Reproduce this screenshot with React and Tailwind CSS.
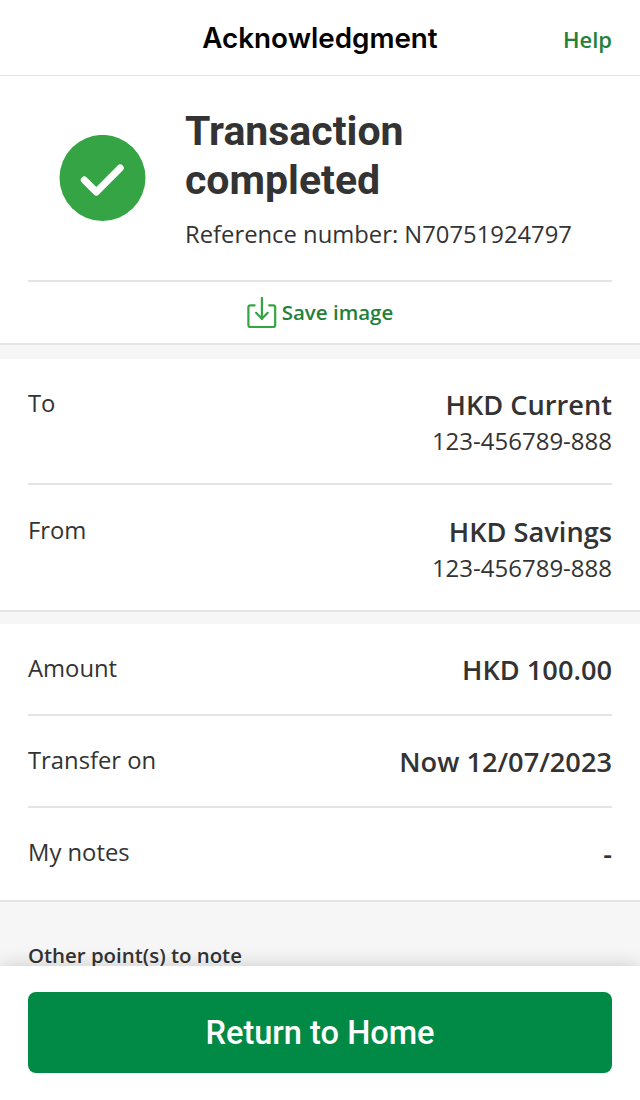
function SuccessIcon() {
  return (
    <svg width="87" height="86" viewBox="0 0 87 86" fill="none" aria-hidden="true">
      <circle cx="43.5" cy="42.9" r="43" fill="#35a444" />
      <path
        d="M25.3 45L37.3 57L61.2 33"
        stroke="#fff"
        strokeWidth="7"
        strokeLinecap="round"
        strokeLinejoin="round"
      />
    </svg>
  )
}

function SaveIcon() {
  return (
    <svg
      width="30"
      height="32"
      viewBox="0 0 30 32"
      fill="none"
      stroke="#35a444"
      strokeWidth="2.2"
      strokeLinecap="round"
      strokeLinejoin="round"
      aria-hidden="true"
    >
      <path d="M7.6 8.3H3.4Q1.4 8.3 1.4 10.3V28Q1.4 30 3.4 30H26.2Q28.2 30 28.2 28V10.3Q28.2 8.3 26.2 8.3H22.2" />
      <path d="M14.9 1V21.8" />
      <path d="M9.1 15.8L14.9 21.8L20.7 15.8" />
    </svg>
  )
}

function Row({ label, value, detail, className }) {
  return (
    <div className={`flex justify-between ${className}`}>
      <span className="text-[23.8px] leading-[32px]">{label}</span>
      <div className="text-right">
        <p className="text-[27.2px] leading-[36px] font-semibold">{value}</p>
        {detail && <p className="text-[24px] leading-[36px]">{detail}</p>}
      </div>
    </div>
  )
}

export default function App() {
  return (
    <div className="flex h-[1100px] w-[640px] flex-col overflow-hidden bg-white font-['Open_Sans',sans-serif] text-[#333]">
      <header className="grid h-[76px] shrink-0 grid-cols-[1fr_auto_1fr] items-center border-b border-[#e4e4e4] px-7">
        <h1 className="col-start-2 font-['Inter',sans-serif] text-[27.8px] leading-[36px] font-semibold text-black">
          Acknowledgment
        </h1>
        <button type="button" className="justify-self-end pt-[3px] text-[22px] leading-[32px] font-semibold text-[#23803a]">
          Help
        </button>
      </header>

      <main className="min-h-0 flex-1 overflow-hidden">
        <section className="h-[269px] border-b-2 border-[#e4e4e4] px-7">
          <div className="flex h-[206px] border-b-2 border-[#e4e4e4] pl-[31px]">
            <div className="mt-[59px] mr-[39px] shrink-0">
              <SuccessIcon />
            </div>
            <div className="pt-[31px]">
              <h2 className="w-[300px] font-['Roboto',sans-serif] text-[41px] leading-[49px] font-bold">
                Transaction completed
              </h2>
              <p className="mt-[13px] text-[23.8px] leading-[32px]">Reference number: N70751924797</p>
            </div>
          </div>
          <button type="button" className="flex w-full justify-center gap-[5px] pt-[15px] text-[#23803a]">
            <SaveIcon />
            <span className="text-[20.5px] leading-[31px] font-semibold">Save image</span>
          </button>
        </section>

        <div className="h-[14px] bg-[#f6f6f6]" />

        <section className="border-b-2 border-[#e4e4e4] px-7">
          <Row
            label="To"
            value="HKD Current"
            detail="123-456789-888"
            className="h-[126px] border-b-2 border-[#e4e4e4] pt-[28px]"
          />
          <Row label="From" value="HKD Savings" detail="123-456789-888" className="h-[125px] pt-[29px]" />
        </section>

        <div className="h-[12px] bg-[#f6f6f6]" />

        <section className="border-b-2 border-[#e4e4e4] px-7">
          <Row label="Amount" value="HKD 100.00" className="h-[92px] border-b-2 border-[#e4e4e4] pt-[28px]" />
          <Row label="Transfer on" value="Now 12/07/2023" className="h-[92px] border-b-2 border-[#e4e4e4] pt-[28px]" />
          <Row label="My notes" value="-" className="h-[92px] pt-[28px]" />
        </section>

        <section className="h-[80px] bg-[#f6f6f6] px-7 pt-[39px]">
          <h3 className="text-[20.4px] leading-[28px] font-semibold">Other point(s) to note</h3>
        </section>
      </main>

      <footer className="z-10 h-[134px] shrink-0 bg-white px-7 pt-[26px] shadow-[0_0_18px_rgba(0,0,0,0.18)]">
        <button
          type="button"
          className="h-[81px] w-full rounded-lg bg-[#008a45] pt-[2px] font-['Roboto',sans-serif] text-[32.6px] font-medium text-white"
        >
          Return to Home
        </button>
      </footer>
    </div>
  )
}
